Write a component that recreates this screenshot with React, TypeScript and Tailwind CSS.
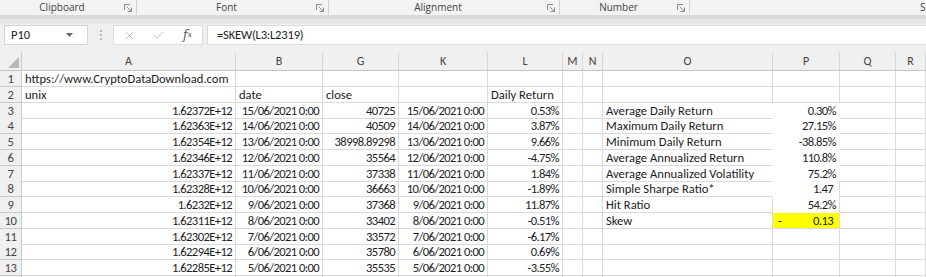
import React from 'react';
import { X, Check } from 'lucide-react';

type Cell = { t?: string; right?: boolean; cls?: string; extra?: React.ReactNode };

const COLS = 'grid-cols-[22px_214px_87px_76px_89px_75px_20px_20px_170px_67px_56px_1fr]';
const LETTERS = ['A', 'B', 'G', 'K', 'L', 'M', 'N', 'O', 'P', 'Q', 'R'];

const DATA: [string, string, string, string, string][] = [
  ['1.62372E+12', '15/06/2021 0:00', '40725', '15/06/2021 0:00', '0.53%'],
  ['1.62363E+12', '14/06/2021 0:00', '40509', '14/06/2021 0:00', '3.87%'],
  ['1.62354E+12', '13/06/2021 0:00', '38998.89298', '13/06/2021 0:00', '9.66%'],
  ['1.62346E+12', '12/06/2021 0:00', '35564', '12/06/2021 0:00', '-4.75%'],
  ['1.62337E+12', '11/06/2021 0:00', '37338', '11/06/2021 0:00', '1.84%'],
  ['1.62328E+12', '10/06/2021 0:00', '36663', '10/06/2021 0:00', '-1.89%'],
  ['1.6232E+12', '9/06/2021 0:00', '37368', '9/06/2021 0:00', '11.87%'],
  ['1.62311E+12', '8/06/2021 0:00', '33402', '8/06/2021 0:00', '-0.51%'],
  ['1.62302E+12', '7/06/2021 0:00', '33572', '7/06/2021 0:00', '-6.17%'],
  ['1.62294E+12', '6/06/2021 0:00', '35780', '6/06/2021 0:00', '0.69%'],
  ['1.62285E+12', '5/06/2021 0:00', '35535', '5/06/2021 0:00', '-3.55%'],
];

const STATS: [string, string][] = [
  ['Average Daily Return', '0.30%'],
  ['Maximum Daily Return', '27.15%'],
  ['Minimum Daily Return', '-38.85%'],
  ['Average Annualized Return', '110.8%'],
  ['Average Annualized Volatility', '75.2%'],
  ['Simple Sharpe Ratio*', '1.47'],
  ['Hit Ratio', '54.2%'],
  ['Skew', '0.13'],
];

function buildRow(r: number): Cell[] {
  const cells: Cell[] = LETTERS.map(() => ({}));
  if (r === 1) cells[0] = { t: 'https://www.CryptoDataDownload.com' };
  if (r === 2) {
    cells[0] = { t: 'unix' };
    cells[1] = { t: 'date' };
    cells[2] = { t: 'close' };
    cells[4] = { t: 'Daily Return' };
  }
  const d = DATA[r - 3];
  if (d) {
    cells[0] = { t: d[0], right: true };
    cells[1] = { t: d[1], right: true };
    cells[2] = { t: d[2], right: true };
    cells[3] = { t: d[3], right: true };
    cells[4] = { t: d[4], right: true };
  }
  const s = STATS[r - 3];
  if (s) {
    cells[7] = { t: s[0] };
    cells[8] = { t: s[1], right: true };
  }
  // white-filled stats block hides some gridlines
  if (r >= 3 && r <= 8) cells[7].cls = 'border-r-transparent';
  if (r >= 3 && r <= 9) cells[8].cls = 'border-b-transparent';
  if (r >= 3 && r <= 7) cells[8].cls = 'border-b-transparent border-r-transparent';
  if (r === 8) cells[8].cls = 'border-b-transparent pr-[6px]';
  if (r === 10) {
    cells[8] = {
      t: '0.13',
      right: true,
      cls: 'bg-[#ffff00] pr-[6px]',
      extra: <span className="absolute left-[5px] top-0">-</span>,
    };
  }
  return cells;
}

function Launcher() {
  return (
    <svg width="8" height="8" viewBox="0 0 8 8" className="shrink-0">
      <path d="M0.5 6V0.5H6" fill="none" stroke="#8a8a8a" strokeWidth="1" />
      <path d="M2.5 2.5L7 7M7.5 3.5V7.5H3.5" fill="none" stroke="#8a8a8a" strokeWidth="1" />
    </svg>
  );
}

function Group({ label, width }: { label: string; width: string }) {
  return (
    <div className={`${width} h-full flex items-center border-r border-[#d2d2d2] shrink-0`}>
      <span className="flex-1 text-center">{label}</span>
      <span className="pr-[4px] flex items-center">
        <Launcher />
      </span>
    </div>
  );
}

export default function App() {
  const rows = Array.from({ length: 14 }, (_, i) => i + 1);
  return (
    <div className="w-[926px] h-[277px] overflow-hidden bg-white font-['Carlito','Lato',sans-serif] text-[12.6px] text-[#1c1c1c]">
      {/* ribbon group labels */}
      <div className="h-[15px] bg-[#f3f3f3] flex text-[10px] text-[#444] font-['Open_Sans',sans-serif]">
        <Group label="Clipboard" width="w-[137px]" />
        <Group label="Font" width="w-[192px]" />
        <Group label="Alignment" width="w-[231px]" />
        <Group label="Number" width="w-[130px]" />
        <div className="flex-1 flex justify-end items-center">
          <span className="w-[6px] overflow-hidden">S</span>
        </div>
      </div>
      <div className="h-[4px] bg-[#d9d9d9]" />
      <div className="h-[5px] bg-[#e6e6e6]" />

      {/* formula bar */}
      <div className="h-[28px] bg-[#efefef] pt-[1px]">
        <div className="h-[20px] flex items-stretch">
          <div className="ml-[4px] w-[84px] bg-white border border-[#d4d4d4] flex items-center pl-[6px] pr-[14px]">
            <span className="flex-1 text-[12.5px]">P10</span>
            <svg width="7" height="4" viewBox="0 0 7 4">
              <path d="M0 0H7L3.5 4Z" fill="#666" />
            </svg>
          </div>
          <div className="w-[25px] flex flex-col items-center justify-center gap-[2px]">
            <span className="w-[2px] h-[2px] bg-[#b5b5b5]" />
            <span className="w-[2px] h-[2px] bg-[#b5b5b5]" />
            <span className="w-[2px] h-[2px] bg-[#b5b5b5]" />
          </div>
          <div className="w-[90px] bg-white border border-[#dcdcdc] flex items-center">
            <span className="w-[30px] flex justify-center">
              <X size={13} strokeWidth={1.3} color="#a8a8a8" />
            </span>
            <span className="w-[29px] flex justify-center">
              <Check size={13} strokeWidth={1.3} color="#a8a8a8" />
            </span>
            <span className="w-[29px] flex justify-center font-['DejaVu_Serif',serif] italic text-[12px] text-[#555]">
              f<span className="text-[8px] mt-[3px]">x</span>
            </span>
          </div>
          <div className="ml-[4px] flex-1 bg-white border-y border-l border-[#dcdcdc] flex items-center pl-[9px] text-[12.6px] tracking-[-0.2px]">
            =SKEW(L3:L2319)
          </div>
        </div>
      </div>

      {/* column headers */}
      <div className={`grid ${COLS} h-[19px] bg-[#f0f0f0] border-b border-[#c4c4c4] text-[#444] text-[12px]`}>
        <div className="relative border-r border-[#c8c8c8]">
          <svg width="11" height="11" viewBox="0 0 11 11" className="absolute left-[8px] top-[5px]">
            <path d="M11 0V11H0Z" fill="#b8b8b8" />
          </svg>
        </div>
        {LETTERS.map((l) => (
          <div key={l} className="border-r border-[#d6d6d6] flex items-center justify-center">
            {l}
          </div>
        ))}
      </div>

      {/* rows */}
      {rows.map((r) => {
        const cells = buildRow(r);
        return (
          <div key={r} className={`grid ${COLS} h-[15.75px] leading-[15px]`}>
            <div className="bg-[#f0f0f0] border-r border-b border-[#c8c8c8] text-[#444] text-center tracking-[-0.5px]">
              {r}
            </div>
            {cells.map((c, i) => (
              <div
                key={i}
                className={`relative border-r border-b border-[#dadada] px-[3px] whitespace-nowrap ${
                  c.right ? 'text-right tracking-[-0.6px]' : 'text-left'
                } ${c.cls ?? ''}`}
              >
                {c.extra}
                {c.t}
              </div>
            ))}
          </div>
        );
      })}
    </div>
  );
}
